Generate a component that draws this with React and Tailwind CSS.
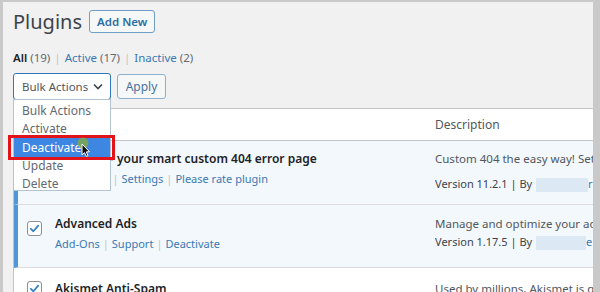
import React from "react";

const font = { fontFamily: '"Noto Sans", "Open Sans", sans-serif' };

function Check({ className = "" }) {
  return (
    <div className={"w-[15px] h-[15px] rounded-[3px] border border-[#8c8f94] bg-white flex items-center justify-center " + className}>
      <svg width="11" height="11" viewBox="0 0 12 12" fill="none">
        <path d="M2 6.3 L4.8 9 L10 2.8" stroke="#3582c4" strokeWidth="1.9" strokeLinecap="round" strokeLinejoin="round" />
      </svg>
    </div>
  );
}

function Sep({ cls = "px-[3px]" }) {
  return <span className={"text-[#c3c4c7] " + cls}>|</span>;
}

function Blur({ w }) {
  return <span className="inline-block h-[14px] align-middle bg-[#dce8f3] ml-[1px]" style={{ width: w }} />;
}

function Row({ active, title, actions, desc, version, blurW, tail, top = "pt-[9px]", vmt = "mt-[7px]", chk = "pt-[14px]", h }) {
  return (
    <div
      className={
        "flex border-b border-[#dcdcde] " +
        (active ? "bg-[#f3f8fc] border-l-[4px] border-l-[#4f97d9]" : "bg-white border-l-[4px] border-l-transparent")
      }
      style={{ height: h }}
    >
      <div className={"w-[37px] shrink-0 pl-[9px] " + chk}>
        <Check />
      </div>
      <div className={"w-[380px] shrink-0 " + top}>
        <div className="text-[12px] leading-[18px] font-semibold text-[#1d2327] whitespace-nowrap">{title}</div>
        {actions && (
          <div className="mt-[2px] text-[11px] leading-[18px] text-[#3b78b4] whitespace-nowrap">
            {actions.map((a, i) => (
              <React.Fragment key={i}>
                {i > 0 && <Sep />}
                <span>{a}</span>
              </React.Fragment>
            ))}
          </div>
        )}
      </div>
      <div className={"flex-1 min-w-0 overflow-hidden " + top}>
        <div className="text-[11.5px] leading-[18px] text-[#50575e] whitespace-nowrap">{desc}</div>
        {version && (
          <div className={vmt + " text-[11px] leading-[18px] text-[#3c434a] whitespace-nowrap"}>
            {version} | By <Blur w={blurW} />
            <span className="text-[#3b78b4]">{tail}</span>
          </div>
        )}
      </div>
    </div>
  );
}

export default function App() {
  return (
    <div className="w-[600px] h-[292px] bg-[#c9c9c9] pt-[2px] pl-[3px] pr-[7px] overflow-hidden" style={font}>
      <div className="h-[300px] bg-[#f1f1f1] relative overflow-hidden">
        {/* Header */}
        <div className="flex items-center pl-[10px] pt-[8px] gap-[7px]">
          <h1 className="text-[20px] leading-[23px] text-[#3c434a]">Plugins</h1>
          <div className="h-[23px] px-[7px] flex items-center rounded-[3px] border border-[#6f9fc9] bg-[#f6f7f7] text-[11.5px] font-semibold text-[#2d6da6] whitespace-nowrap">
            Add New
          </div>
        </div>

        {/* Filters */}
        <div className="pl-[10px] mt-[16px] text-[11.5px] leading-[18px] text-[#646970] whitespace-nowrap">
          <span className="font-semibold text-[#1d2327]">All</span> (19)
          <Sep cls="px-[4px]" />
          <span className="text-[#3b78b4]">Active</span> (17)
          <Sep cls="px-[4px]" />
          <span className="text-[#3b78b4]">Inactive</span> (2)
        </div>

        {/* Bulk actions */}
        <div className="pl-[10px] mt-[6px] flex items-center gap-[6px]">
          <div className="w-[98px] h-[27px] rounded-[3px] border border-[#2f78b8] bg-white flex items-center justify-between pl-[8px] pr-[7px] text-[11.5px] text-[#50575e] whitespace-nowrap">
            <span>Bulk Actions</span>
            <svg width="10" height="7" viewBox="0 0 10 7" fill="none">
              <path d="M1 1.5 L5 5.5 L9 1.5" stroke="#3c434a" strokeWidth="1.6" />
            </svg>
          </div>
          <div className="w-[49px] h-[25px] rounded-[3px] border border-[#8fb0cd] bg-[#f6f7f7] flex items-center justify-center text-[12px] text-[#48739c]">
            Apply
          </div>
        </div>

        {/* Table */}
        <div className="ml-[10px] mt-[8px] bg-white border-t border-l border-[#c3c4c7]">
          <div className="h-[32px] flex items-center border-b border-[#c3c4c7]">
            <div className="w-[41px] shrink-0 pl-[13px]">
              <Check />
            </div>
            <div className="w-[380px] shrink-0 text-[12px] text-[#50575e]">Plugin</div>
            <div className="flex-1 text-[12px] text-[#50575e]">Description</div>
          </div>
          <Row
            active
            h={64}
            title="404page – your smart custom 404 error page"
            actions={["Deactivate", "Settings", "Please rate plugin"]}
            desc="Custom 404 the easy way! Set any page as custom 404 error page."
            version="Version 11.2.1"
            blurW={52}
            tail="r"
          />
          <Row
            active
            h={63}
            top="pt-[10px]"
            vmt="mt-[0px]"
            chk="pt-[16px]"
            title="Advanced Ads"
            actions={["Add-Ons", "Support", "Deactivate"]}
            desc="Manage and optimize your ads in WordPress"
            version="Version 1.17.5"
            blurW={50}
            tail="e"
          />
          <Row
            h={60}
            top="pt-[12px]"
            chk="pt-[13px]"
            title="Akismet Anti-Spam"
            desc="Used by millions, Akismet is quite possibly the best way in the world to protect your blog."
          />
        </div>

        {/* Dropdown */}
        <div className="absolute left-[10px] top-[97px] w-[98px] h-[92px] bg-white border border-[#b3c3d3] pt-[2px] text-[12px] text-[#646970] whitespace-nowrap">
          <div className="h-[18px] leading-[18px] pl-[8px]">Bulk Actions</div>
          <div className="h-[18px] leading-[18px] pl-[8px]">Activate</div>
          <div className="h-[19px] leading-[19px] pl-[8px] bg-[#3d87e3] text-white">Deactivate</div>
          <div className="h-[18px] leading-[18px] pl-[8px]">Update</div>
          <div className="h-[18px] leading-[18px] pl-[8px]">Delete</div>
          <div className="absolute left-[-6px] top-[35px] w-[107px] h-[25px] border-[3px] border-[#e3131b]" />
          <svg className="absolute left-[62px] top-[37px]" width="16" height="20" viewBox="0 0 16 20">
            <circle cx="7" cy="6" r="5.5" fill="#7ea84c" opacity="0.85" />
            <path d="M6 7 L6 18 L8.5 15.6 L10.3 19.4 L12 18.6 L10.3 14.9 L13.5 14.7 Z" fill="#111" stroke="#fff" strokeWidth="1" />
          </svg>
        </div>
      </div>
    </div>
  );
}
